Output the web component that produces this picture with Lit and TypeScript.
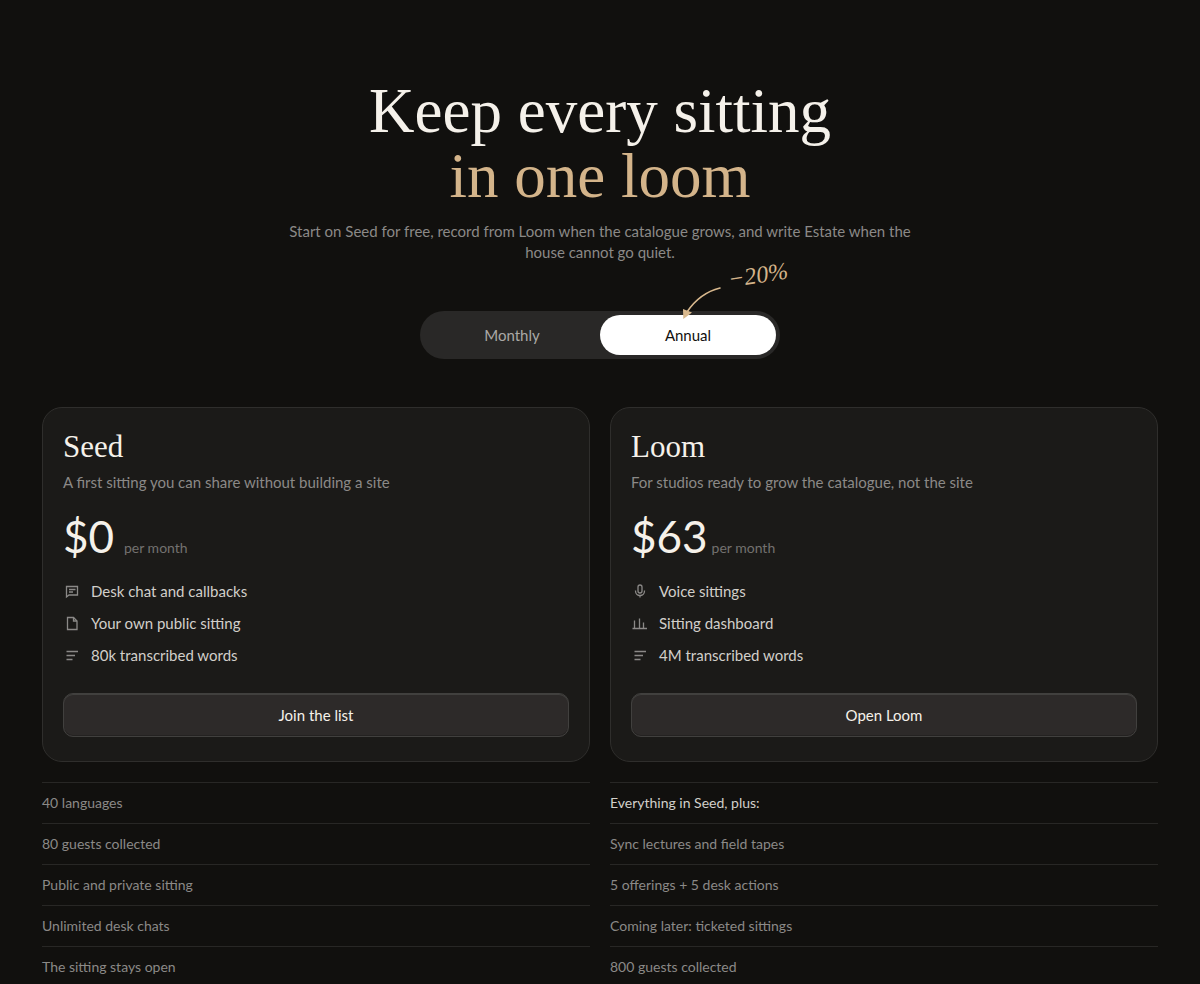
import { LitElement, html, css, svg } from "lit";
import { customElement, state } from "lit/decorators.js";

type Plan = {
  name: string;
  blurb: string;
  monthly: number;
  annual: number;
  cta: string;
  highlights: { icon: string; text: string }[];
  extras: { text: string; lead?: boolean }[];
};

const icons: Record<string, unknown> = {
  chat: svg`<path d="M3.500 4.500h11v8.500h-8.500l-2.500 2z"/><path d="M6 7.500h6.500M6 10h4"/>`,
  page: svg`<path d="M4.500 3.500h6l3.500 3.500v8.500h-9.500z"/><path d="M10.500 3.500v3.500h3.500"/>`,
  lines: svg`<path d="M3.500 5.500h11.500M3.500 9.500h8.500M3.500 13.500h6"/>`,
  mic: svg`<rect x="7" y="3" width="4" height="8" rx="2"/><path d="M4.500 8.500v.5a4.500 4.500 0 0 0 9 0v-.5M9 13.500v2"/>`,
  chart: svg`<path d="M1.500 14.500h14.500M3.500 14.500v-8M8.500 14.500v-10M12.500 14.500v-6"/>`,
};

const plans: Plan[] = [
  {
    name: "Seed",
    blurb: "A first sitting you can share without building a site",
    monthly: 0,
    annual: 0,
    cta: "Join the list",
    highlights: [
      { icon: "chat", text: "Desk chat and callbacks" },
      { icon: "page", text: "Your own public sitting" },
      { icon: "lines", text: "80k transcribed words" },
    ],
    extras: [
      { text: "40 languages" },
      { text: "80 guests collected" },
      { text: "Public and private sitting" },
      { text: "Unlimited desk chats" },
      { text: "The sitting stays open" },
    ],
  },
  {
    name: "Loom",
    blurb: "For studios ready to grow the catalogue, not the site",
    monthly: 79,
    annual: 63,
    cta: "Open Loom",
    highlights: [
      { icon: "mic", text: "Voice sittings" },
      { icon: "chart", text: "Sitting dashboard" },
      { icon: "lines", text: "4M transcribed words" },
    ],
    extras: [
      { text: "Everything in Seed, plus:", lead: true },
      { text: "Sync lectures and field tapes" },
      { text: "5 offerings + 5 desk actions" },
      { text: "Coming later: ticketed sittings" },
      { text: "800 guests collected" },
    ],
  },
];

@customElement("app-root")
export class AppRoot extends LitElement {
  @state() private annual = true;

  static styles = css`
    :host {
      display: block;
      box-sizing: border-box;
      min-height: 100vh;
      padding: 79px 42px 0;
      background: #11100e;
      color: #f5f1ea;
      font: 15px/22px Lato, "Liberation Sans", sans-serif;
    }
    * {
      box-sizing: border-box;
    }
    h1,
    h2,
    p,
    ul {
      margin: 0;
      padding: 0;
      font-weight: 400;
    }
    ul {
      list-style: none;
    }
    button {
      font: inherit;
      border: 0;
      cursor: pointer;
    }
    .hero {
      display: flex;
      flex-direction: column;
      align-items: center;
      text-align: center;
    }
    .title {
      font: 63px/65px "Liberation Serif", serif;
    }
    .accent {
      display: block;
      color: #d4b48a;
    }
    .intro {
      max-width: 660px;
      margin-top: 12px;
      line-height: 21px;
      color: #8b8987;
    }
    .billing {
      position: relative;
      display: grid;
      grid-template-columns: 1fr 1fr;
      width: 360px;
      max-width: 100%;
      margin-top: 48px;
      padding: 4px;
      border-radius: 24px;
      background: #292827;
    }
    .option {
      height: 40px;
      border-radius: 20px;
      background: none;
      color: #aaa8a6;
    }
    .option.on {
      background: #fff;
      color: #11100e;
    }
    .saving {
      position: absolute;
      left: 308px;
      bottom: 70px;
      font: italic 24px/28px "Liberation Serif", serif;
      color: #d4b48a;
      white-space: nowrap;
      transform: rotate(-9deg);
    }
    .arrow {
      position: absolute;
      left: 260px;
      bottom: 36px;
      width: 44px;
      height: 40px;
      color: #d9b98e;
      pointer-events: none;
    }
    .plans {
      display: grid;
      grid-template-columns: 1fr 1fr;
      gap: 20px;
      margin-top: 48px;
    }
    .card {
      padding: 20px 20px 24px;
      border: 1px solid #2f2e2c;
      border-radius: 20px;
      background: #1b1a18;
    }
    .name {
      font: 31px/38px "Liberation Serif", serif;
    }
    .blurb {
      margin-top: 5px;
      color: #8b8987;
    }
    .price {
      display: flex;
      align-items: baseline;
      gap: 4px;
      margin-top: 19px;
    }
    .amount {
      min-width: 57px;
      font-size: 44px;
      line-height: 48px;
    }
    .per {
      font-size: 14px;
      color: #73716f;
    }
    .highlights {
      display: grid;
      gap: 10px;
      margin-top: 20px;
      color: #d2cfca;
    }
    .highlight {
      display: flex;
      align-items: center;
      gap: 10px;
    }
    .icon {
      width: 18px;
      height: 18px;
      color: #8b8987;
    }
    .cta {
      display: block;
      width: 100%;
      height: 44px;
      margin-top: 27px;
      border: 1px solid #41403e;
      border-radius: 10px;
      background: #2d2a29;
      box-shadow: inset 0 1px 0 #41403e, inset 0 -1px 0 #242221;
      color: #f5f1ea;
    }
    .extras {
      margin-top: 20px;
      font-size: 14px;
      line-height: 20px;
      color: #8b8987;
    }
    .extra {
      padding: 10px 0;
      border-top: 1px solid #282725;
    }
    .lead {
      color: #d2cfca;
    }
  `;

  private renderPlan(plan: Plan) {
    return html`<section>
      <div class="card">
        <h2 class="name">${plan.name}</h2>
        <p class="blurb">${plan.blurb}</p>
        <div class="price">
          <span class="amount">$${this.annual ? plan.annual : plan.monthly}</span>
          <span class="per">per month</span>
        </div>
        <ul class="highlights">
          ${plan.highlights.map(
            (item) => html`<li class="highlight">
              <svg class="icon" viewBox="0 0 18 18" fill="none" stroke="currentColor" stroke-width="1.300" aria-hidden="true">
                ${icons[item.icon]}
              </svg>
              ${item.text}
            </li>`
          )}
        </ul>
        <button class="cta" type="button">${plan.cta}</button>
      </div>
      <ul class="extras">
        ${plan.extras.map((item) => html`<li class="extra ${item.lead ? "lead" : ""}">${item.text}</li>`)}
      </ul>
    </section>`;
  }

  render() {
    return html`
      <header class="hero">
        <h1 class="title">Keep every sitting <span class="accent">in one loom</span></h1>
        <p class="intro">
          Start on Seed for free, record from Loom when the catalogue grows, and write Estate when the house cannot go
          quiet.
        </p>
        <div class="billing" role="group" aria-label="Billing period">
          <button
            type="button"
            class="option ${this.annual ? "" : "on"}"
            aria-pressed=${!this.annual}
            @click=${() => (this.annual = false)}
          >
            Monthly
          </button>
          <button
            type="button"
            class="option ${this.annual ? "on" : ""}"
            aria-pressed=${this.annual}
            @click=${() => (this.annual = true)}
          >
            Annual
          </button>
          <span class="saving">−20%</span>
          <svg class="arrow" viewBox="0 0 44 40" aria-hidden="true">
            <path d="M40 5C26 8.500 15 17 7 29" fill="none" stroke="currentColor" stroke-width="1.600" stroke-linecap="round" />
            <path d="M3 26l9 3.500-8.700 6.500z" fill="currentColor" />
          </svg>
        </div>
      </header>
      <main class="plans">${plans.map((plan) => this.renderPlan(plan))}</main>
    `;
  }
}
